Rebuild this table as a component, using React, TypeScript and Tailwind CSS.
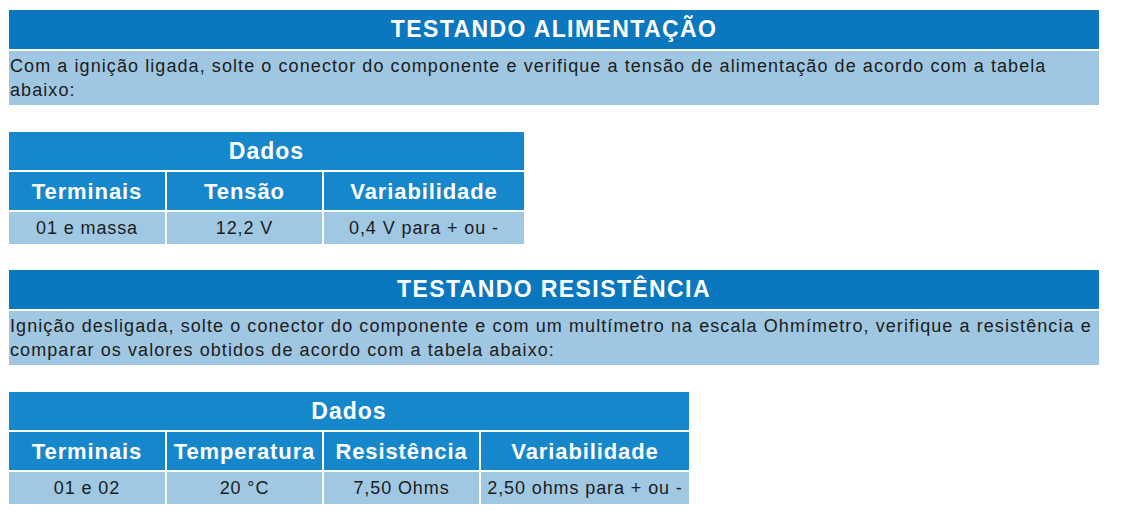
import React from "react"

const font = { fontFamily: '"Liberation Sans", Arial, sans-serif' }

type Section = {
  title: string
  lines: string[]
  cols: string
  heads: string[]
  values: string[]
}

const sections: Section[] = [
  {
    title: "TESTANDO ALIMENTAÇÃO",
    lines: [
      "Com a ignição ligada, solte o conector do componente e verifique a tensão de alimentação de acordo com a tabela",
      "abaixo:",
    ],
    cols: "grid-cols-[156px_155px_200px]",
    heads: ["Terminais", "Tensão", "Variabilidade"],
    values: ["01 e massa", "12,2 V", "0,4 V para + ou -"],
  },
  {
    title: "TESTANDO RESISTÊNCIA",
    lines: [
      "Ignição desligada, solte o conector do componente e com um multímetro na escala Ohmímetro, verifique a resistência e",
      "comparar os valores obtidos de acordo com a tabela abaixo:",
    ],
    cols: "grid-cols-[156px_155px_155px_208px]",
    heads: ["Terminais", "Temperatura", "Resistência", "Variabilidade"],
    values: ["01 e 02", "20 °C", "7,50 Ohms", "2,50 ohms para + ou -"],
  },
]

function Block({ s, first }: { s: Section; first: boolean }) {
  return (
    <div className={first ? "" : "mt-[26px]"}>
      <div className="w-[1090px] flex flex-col gap-[2px]">
        <div className="h-[39px] bg-[#0b77bf] flex items-center justify-center text-white font-bold text-[23px] tracking-[1.4px]">
          {s.title}
        </div>
        <div className="h-[54px] bg-[#9fc7e1] px-[1px] pt-[3px] text-[18px] leading-[24px] text-[#1c1c1c] tracking-[1.08px] whitespace-nowrap overflow-hidden">
          {s.lines.map((l) => (
            <div key={l}>{l}</div>
          ))}
        </div>
      </div>
      <div className={`mt-[27px] grid gap-[2px] w-max ${s.cols}`}>
        <div className="col-span-full h-[38px] bg-[#1787cc] flex items-center justify-center text-white font-bold text-[23px] tracking-[1px]">
          Dados
        </div>
        {s.heads.map((h) => (
          <div
            key={h}
            className="h-[38px] bg-[#1787cc] flex items-center justify-center text-white font-bold text-[22px] tracking-[0.9px] whitespace-nowrap"
          >
            {h}
          </div>
        ))}
        {s.values.map((v) => (
          <div
            key={v}
            className="h-[32px] bg-[#a0c8e2] flex items-center justify-center text-[18px] text-[#1c1c1c] tracking-[0.9px] whitespace-nowrap"
          >
            {v}
          </div>
        ))}
      </div>
    </div>
  )
}

export default function App() {
  return (
    <div style={font} className="w-[1133px] h-[514px] bg-white pl-[9px] pt-[10px] overflow-hidden">
      {sections.map((s, i) => (
        <Block key={s.title} s={s} first={i === 0} />
      ))}
    </div>
  )
}
